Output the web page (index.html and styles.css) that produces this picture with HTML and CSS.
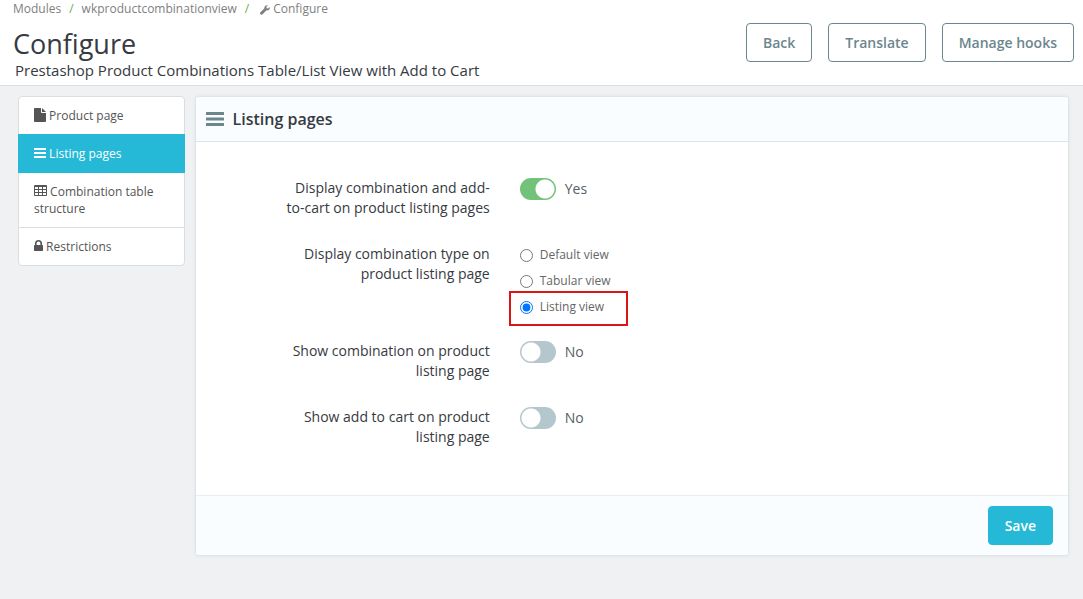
FILE: index.html
```html
<!DOCTYPE html>
<html lang="en">
<head>
  <meta charset="UTF-8">
  <meta name="viewport" content="width=device-width, initial-scale=1.0">
  <title>Configure</title>
  <link rel="stylesheet" href="styles.css">
</head>
<body>

  <header class="page-head">
    <div class="page-info">
      <nav class="breadcrumb">
        <a href="#">Modules</a>
        <span class="sep">/</span>
        <a href="#">wkproductcombinationview</a>
        <span class="sep">/</span>
        <a href="#"><svg class="icon-wrench" viewBox="0 0 12 12"><path d="M11.600 2.400 9.700 4.200 8 3.900 7.700 2.200 9.600.4C7.700-.2 5.700.8 5.300 2.600c-.1.500-.1.900 0 1.300L.6 8.600c-.8.800-.8 1.900-.1 2.600.8.800 1.800.8 2.600 0l4.800-4.800c2.300.6 4.500-1.200 3.700-4z"/></svg>Configure</a>
      </nav>
      <h1>Configure</h1>
      <p class="subtitle">Prestashop Product Combinations Table/List View with Add to Cart</p>
    </div>
    <div class="toolbar">
      <button type="button" class="btn btn-outline">Back</button>
      <button type="button" class="btn btn-outline">Translate</button>
      <button type="button" class="btn btn-outline">Manage hooks</button>
    </div>
  </header>

  <main class="content">
    <nav class="list-group">
      <a href="#"><svg class="icon-file" viewBox="0 0 12 14"><path d="M0 .8Q0 0 .8 0H7v4.200q0 .8.8.8H12v8.200q0 .8-.8.8H.8Q0 14 0 13.200zM8 0l4 4H8z"/></svg> Product page</a>
      <a href="#" class="active"><svg class="icon-bars" viewBox="0 0 12 10"><path d="M0 0h12v2H0zM0 4h12v2H0zM0 8h12v2H0z"/></svg> Listing pages</a>
      <a href="#"><svg class="icon-table" viewBox="0 0 13 11"><path fill-rule="evenodd" d="M1 0h11q1 0 1 1v9q0 1-1 1H1q-1 0-1-1V1q0-1 1-1zM1 2v2h3V2zM5 2v2h3V2zM9 2v2h3V2zM1 5v2h3V5zM5 5v2h3V5zM9 5v2h3V5zM1 8v2h3V8zM5 8v2h3V8zM9 8v2h3V8z"/></svg> Combination table structure</a>
      <a href="#"><svg class="icon-lock" viewBox="0 0 9 11"><path fill-rule="evenodd" d="M1 5V3.500a3.500 3.500 0 0 1 7 0V5h.4q.6 0 .6.6v4.800q0 .6-.6.6H.6q-.6 0-.6-.6V5.600Q0 5 .6 5zM2.600 5h3.800V3.500a1.900 1.900 0 0 0-3.800 0z"/></svg> Restrictions</a>
    </nav>

    <form class="panel">
      <h2 class="panel-heading">
        <svg class="icon-heading" viewBox="0 0 18 14"><path d="M.5 0h17q.5 0 .5.500v2q0 .5-.5.500H.5Q0 3 0 2.500v-2Q0 0 .5 0zM.5 5.500h17q.5 0 .5.500v2q0 .5-.5.500H.5Q0 8.500 0 8V6q0-.5.5-.5zM.5 11h17q.5 0 .5.500v2q0 .5-.5.500H.5q-.5 0-.5-.5v-2q0-.5.5-.5z"/></svg>
        Listing pages
      </h2>

      <div class="panel-body">
        <div class="form-row">
          <label class="form-label" for="showAddToCart">Display combination and add-to-cart on product listing pages</label>
          <div class="switch">
            <input type="checkbox" id="showAddToCart" checked>
            <span>Yes</span>
          </div>
        </div>

        <div class="form-row" role="radiogroup" aria-labelledby="viewTypeLabel">
          <span class="form-label" id="viewTypeLabel">Display combination type on product listing page</span>
          <div class="radios">
            <label><input type="radio" name="viewType" value="default"> Default view</label>
            <label><input type="radio" name="viewType" value="tabular"> Tabular view</label>
            <label class="marked"><input type="radio" name="viewType" value="listing" checked> Listing view</label>
          </div>
        </div>

        <div class="form-row">
          <label class="form-label" for="showCombination">Show combination on product listing page</label>
          <div class="switch">
            <input type="checkbox" id="showCombination">
            <span>No</span>
          </div>
        </div>

        <div class="form-row">
          <label class="form-label" for="showCart">Show add to cart on product listing page</label>
          <div class="switch">
            <input type="checkbox" id="showCart">
            <span>No</span>
          </div>
        </div>
      </div>

      <div class="panel-footer">
        <button type="submit" class="btn btn-primary">Save</button>
      </div>
    </form>
  </main>

  <script>
    // Keep the text beside each switch in step with its state
    document.querySelectorAll('.switch input').forEach(box => {
      box.addEventListener('change', () => {
        box.nextElementSibling.textContent = box.checked ? 'Yes' : 'No';
      });
    });
  </script>
</body>
</html>
```
FILE: styles.css
```css
* { box-sizing: border-box; }
body {
  background-color: #eff1f2;
  color: #363a41;
  font-family: 'Open Sans', sans-serif;
  font-size: 14px;
  line-height: 20px;
  margin: 0;
}
a { color: inherit; text-decoration: none; }
svg { fill: currentColor; }

/* Header */
.page-head { display: flex; justify-content: space-between; align-items: flex-start; background: #fff; border-bottom: 1px solid #dddfe1; padding: 0 9px 5px 13px; }
.breadcrumb { display: flex; gap: 8px; color: #808080; font-size: 12px; line-height: 18px; }
.breadcrumb .sep { color: #5fb04a; }
.icon-wrench { width: 10px; height: 10px; margin: 0 3px; vertical-align: -2px; }
h1 { font-size: 27px; line-height: 34px; font-weight: 400; margin: 9px 0 0; }
.subtitle { font-size: 15px; line-height: 19px; margin: 0 0 0 2px; }
.toolbar { display: flex; gap: 16px; padding-top: 23px; }

.btn { font: 600 14px/21px 'Open Sans', sans-serif; padding: 8px 16px; border: 1px solid; border-radius: 4px; cursor: pointer; }
.btn-outline { background: #fff; color: #6c868e; border-color: #6c868e; }
.btn-outline:hover { background: #6c868e; color: #fff; }
.btn-primary { background: #25b9d7; color: #fff; border-color: #25b9d7; }
.btn-primary:hover { background: #1f9db6; }

.content { display: grid; grid-template-columns: 4fr 21fr; gap: 10px; align-items: start; padding: 10px 14px 20px 18px; }

/* Side menu */
.list-group { font-size: 12px; line-height: 17px; color: #555; }
.list-group a { display: block; background: #fff; border: 1px solid #dbdddf; padding: 10px 15px; margin-top: -1px; }
.list-group a:first-child { margin-top: 0; border-radius: 4px 4px 0 0; }
.list-group a:last-child { border-radius: 0 0 4px 4px; }
.list-group a.active { position: relative; background: #25b9d7; border-color: #25b9d7; color: #fff; }
.icon-file { width: 12px; height: 14px; vertical-align: -2px; }
.icon-bars { width: 12px; height: 10px; }
.icon-table { width: 13px; height: 11px; }
.icon-lock { width: 9px; height: 11px; }

/* Panel */
.panel { background: #fff; border: 1px solid #dfe4e6; border-radius: 4px; box-shadow: 0 0 4px rgba(0,0,0,0.06); overflow: hidden; }
.panel-heading { display: flex; align-items: center; gap: 9px; margin: 0; padding: 10px; background: #fafdff; border-bottom: 1px solid #dfe4e6; font-size: 16px; line-height: 24px; font-weight: 600; }
.icon-heading { width: 18px; height: 14px; color: #6c868e; }
.panel-body { display: grid; gap: 26px; padding: 36px 10px 48px 84px; }
.form-row { display: grid; grid-template-columns: 27% 1fr; gap: 30px; align-items: start; }
.form-label { text-align: right; }

.switch { display: flex; align-items: center; gap: 9px; color: #576069; line-height: 22px; }
.switch input { appearance: none; width: 36px; height: 22px; margin: 0; border-radius: 11px; background: radial-gradient(circle at 11px 11px, #fff 9px, transparent 10px) #b3c7cd; cursor: pointer; }
.switch input:checked { background: radial-gradient(circle at 25px 11px, #fff 9px, transparent 10px) #72c279; }

.radios { display: grid; gap: 8px; justify-items: start; color: #666; font-size: 12px; line-height: 18px; padding-top: 2px; }
.radios label { display: flex; align-items: center; gap: 7px; }
.radios input { width: 13px; height: 13px; margin: 0; }
.radios .marked { margin: -7px 0 -11px -11px; padding: 5px 22px 8px 9px; border: 2px solid #dc1414; }

.panel-footer { display: flex; justify-content: flex-end; background: #fafdff; border-top: 1px solid #eaeef0; padding: 10px 15px; }
```
